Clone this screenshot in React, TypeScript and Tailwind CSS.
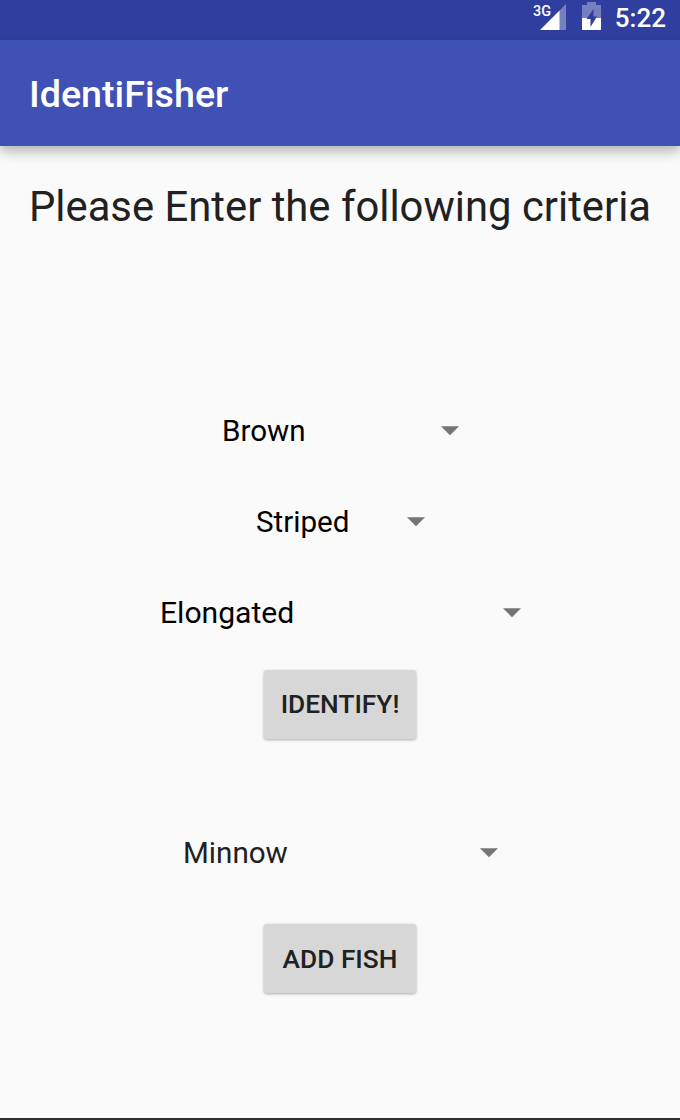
import React from "react";

function Spinner({ label, className }: { label: string; className: string }) {
  return (
    <button className={`flex items-center justify-between leading-9 ${className}`}>
      <span className="whitespace-nowrap">{label}</span>
      <svg width="20" height="10" viewBox="0 0 20 10" fill="#757575">
        <path d="M1 0.3H19L10 9.3Z" />
      </svg>
    </button>
  );
}

function RaisedButton({ label, className }: { label: string; className: string }) {
  return (
    <button className={`flex h-[69px] w-[152px] items-center justify-center rounded-[3px] bg-[#d7d7d7] text-[26.3px] font-medium text-[#212121] shadow-[0_1px_3px_rgba(0,0,0,0.32)] ${className}`}>
      <span className="whitespace-nowrap">{label}</span>
    </button>
  );
}

export default function App() {
  return (
    <div className="flex h-[1120px] w-[680px] flex-col overflow-hidden border-b-2 border-[#303030] bg-[#fafafa] font-[Roboto,sans-serif]">
      <div className="flex h-10 shrink-0 items-start justify-end bg-[#303f9f] text-white">
        <svg width="80" height="40" viewBox="530 0 80 40">
          <path d="M566 4V30H559V11Z" fill="#7680bf" />
          <path d="M559.5 10.5V30H540Z" fill="#fff" />
          <path d="M587 2H596V5H601V18H582V5H587Z" fill="#7680bf" />
          <path d="M582 18H601V30H582Z" fill="#fff" />
          <path d="M593.5 9L586.5 19H590.5V27L597 16.5H593.5Z" fill="#303f9f" />
          <path d="M540 13H551V17H537Z" fill="#303f9f" />
          <text x="533" y="15.5" fontSize="14.5" fontWeight="500" textLength="18" lengthAdjust="spacingAndGlyphs" fill="#fff">3G</text>
        </svg>
        <span className="mr-[14px] ml-[5px] text-[26px] leading-9 font-medium">5:22</span>
      </div>
      <header className="flex h-[106px] shrink-0 items-center bg-[#3f51b5] pt-[3px] pl-[29px] text-[37.7px] font-medium text-white shadow-[0_5px_12px_rgba(0,0,0,0.3)]">
        <h1>IdentiFisher</h1>
      </header>
      <main className="flex flex-col items-center">
        <p className="mt-[37px] text-[41.8px] leading-[48px] whitespace-nowrap text-[#212121]">Please Enter the following criteria</p>
        <Spinner label="Brown" className="mt-[182px] ml-[2px] w-[238px] text-[29.6px] text-black" />
        <Spinner label="Striped" className="mt-[55px] ml-[2px] w-[170px] text-[29.6px] text-black" />
        <Spinner label="Elongated" className="mt-[55px] ml-[2px] w-[362px] text-[30.1px] text-black" />
        <RaisedButton label="IDENTIFY!" className="mt-[39px]" />
        <Spinner label="Minnow" className="mt-[96px] ml-[2px] w-[316px] text-[29.6px] text-[#212121]" />
        <RaisedButton label="ADD FISH" className="mt-[53px] pt-[2px]" />
      </main>
    </div>
  );
}
